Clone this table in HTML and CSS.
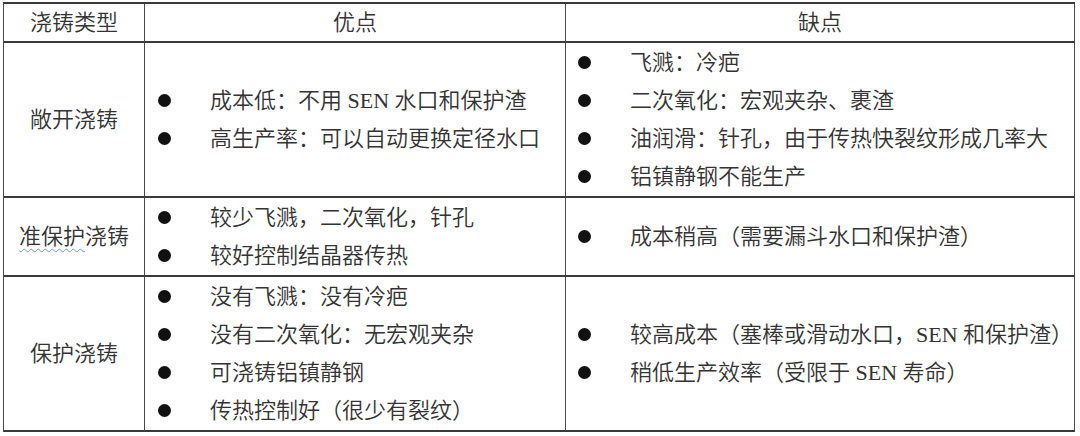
FILE: index.html
```html
<!DOCTYPE html>
<html lang="zh-CN">
<head>
<meta charset="utf-8">
<title>浇铸类型对比</title>
<link rel="stylesheet" href="styles.css">
</head>
<body>
<div class="tbl">
  <div class="cell head">浇铸类型</div>
  <div class="cell head">优点</div>
  <div class="cell head">缺点</div>

  <div class="cell type">敞开浇铸</div>
  <ul class="cell list">
    <li>成本低：不用 SEN 水口和保护渣</li>
    <li>高生产率：可以自动更换定径水口</li>
  </ul>
  <ul class="cell list list-wide">
    <li>飞溅：冷疤</li>
    <li>二次氧化：宏观夹杂、裹渣</li>
    <li>油润滑：针孔，由于传热快裂纹形成几率大</li>
    <li>铝镇静钢不能生产</li>
  </ul>

  <div class="cell type"><span class="spell">准保护</span>浇铸</div>
  <ul class="cell list">
    <li>较少飞溅，二次氧化，针孔</li>
    <li>较好控制结晶器传热</li>
  </ul>
  <ul class="cell list list-wide">
    <li>成本稍高（需要漏斗水口和保护渣）</li>
  </ul>

  <div class="cell type">保护浇铸</div>
  <ul class="cell list">
    <li>没有飞溅：没有冷疤</li>
    <li>没有二次氧化：无宏观夹杂</li>
    <li>可浇铸铝镇静钢</li>
    <li>传热控制好（很少有裂纹）</li>
  </ul>
  <ul class="cell list list-wide">
    <li>较高成本（塞棒或滑动水口，SEN 和保护渣）</li>
    <li>稍低生产效率（受限于 SEN 寿命）</li>
  </ul>
</div>
</body>
</html>
```

FILE: styles.css
```css
html, body {
  margin: 0;
  padding: 0;
  background: #ffffff;
}

body {
  padding: 2px 0 0 3px;
  font-family: "Liberation Serif", "Noto Sans CJK SC", serif;
  font-size: 22px;
  font-weight: 350;
  color: #333333;
}

.tbl {
  display: grid;
  grid-template-columns: 141px 421px 509px;
  grid-template-rows: 39px 155px 79px 155px;
  width: 1071px;
  border-top: 2px solid #3a3a3a;
  border-left: 1px solid #4a4a4a;
}

.cell {
  box-sizing: border-box;
  margin: 0;
  border-right: 1px solid #4a4a4a;
  border-bottom: 2px solid #3a3a3a;
}

.head {
  display: flex;
  align-items: center;
  justify-content: center;
  line-height: 38px;
}

.type {
  display: flex;
  align-items: center;
  justify-content: center;
  line-height: 38px;
}

.spell {
  text-decoration: underline wavy #6e9ede;
  text-decoration-thickness: 1px;
  text-underline-offset: 4px;
}

.list {
  list-style: none;
  padding: 0 0 0 13px;
  display: flex;
  flex-direction: column;
  justify-content: center;
}

.list-wide {
  padding-left: 12px;
}

.list li {
  display: flex;
  align-items: center;
  height: 38px;
  line-height: 38px;
  white-space: nowrap;
}

.list li::before {
  content: "";
  flex: none;
  width: 13px;
  height: 13px;
  border-radius: 50%;
  background: #111111;
  margin-right: 39px;
}
```
